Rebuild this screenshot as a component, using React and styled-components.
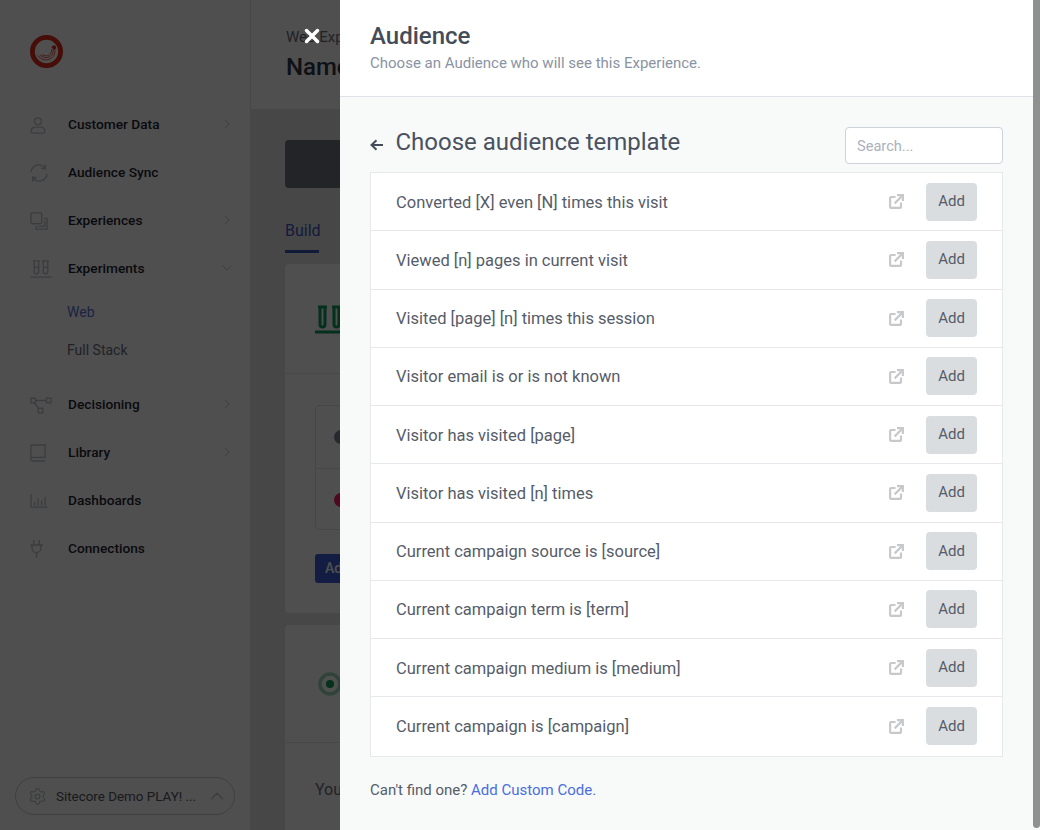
import React from 'react'
import styled, { createGlobalStyle } from 'styled-components'
import { ChevronRight, ChevronDown, ChevronUp, Settings } from 'lucide-react'

const GlobalStyle = createGlobalStyle`
  html, body { margin: 0; padding: 0; height: 100%; overflow: hidden; }
  body { font-family: Roboto, "Liberation Sans", sans-serif; color: #2d3748; }
  * { box-sizing: border-box; }
`

const Page = styled.div`
  position: relative;
  display: flex;
  width: 1040px;
  height: 830px;
  overflow: hidden;
  background: #e6e6e6;
`

const Sidebar = styled.aside`
  flex: 0 0 251px;
  display: flex;
  flex-direction: column;
  padding: 35px 15px 15px 30px;
  background: #fff;
  border-right: 1px solid #e2e5ea;
`

const LogoWrap = styled.div`
  height: 66px;
`

const Nav = styled.nav`
  display: flex;
  flex-direction: column;
  flex: 1;
`

const NavItem = styled.div`
  display: flex;
  align-items: center;
  height: 48px;
  font-size: 13.7px;
  font-weight: 500;
  color: #1f2533;
`

const NavIcon = styled.span`
  flex: 0 0 38px;
  display: flex;
  align-items: center;
  color: #bfc3ca;
`

const NavLabel = styled.span`
  flex: 1;
  margin-top: -2px;
`

const NavArrow = styled.span`
  display: flex;
  margin-top: -2px;
  color: #c4c7cc;
`

const SubItem = styled.div`
  display: flex;
  align-items: center;
  height: 38px;
  padding-left: 37px;
  font-size: 14px;
  color: ${p => (p.$active ? '#5b70dc' : '#6a6f7a')};
`

const SubList = styled.div`
  display: flex;
  flex-direction: column;
  margin-bottom: 12px;
`

const AccountPill = styled.div`
  display: flex;
  align-items: center;
  align-self: flex-start;
  width: 220px;
  height: 38px;
  margin-left: -15px;
  padding: 0 6px 0 12px;
  gap: 9px;
  border: 1px solid #c9ccd2;
  border-radius: 19px;
  font-size: 13.4px;
  color: #50545e;
  & > svg { flex: none; }
`

const AccountName = styled.span`
  flex: 1;
  white-space: nowrap;
`

const Main = styled.main`
  flex: 1;
  min-width: 0;
  display: flex;
  flex-direction: column;
`

const PageHeader = styled.header`
  height: 109px;
  padding: 27px 35px;
  background: #fff;
`

const Crumb = styled.div`
  font-size: 15px;
  line-height: 20px;
  color: #6a6f7a;
  white-space: nowrap;
`

const PageTitle = styled.h1`
  margin: 5px 0 0;
  font-size: 24px;
  line-height: 30px;
  font-weight: 500;
  color: #2d3748;
  white-space: nowrap;
`

const Content = styled.div`
  flex: 1;
  display: flex;
  flex-direction: column;
  padding: 31px 0 0 34px;
`

const DarkBar = styled.div`
  width: 500px;
  height: 48px;
  border-radius: 4px;
  background: #737680;
`

const Tabs = styled.div`
  display: flex;
  height: 34px;
  margin-top: 31px;
  margin-bottom: 11px;
`

const Tab = styled.div`
  width: 34px;
  height: 34px;
  padding-top: 2px;
  border-bottom: 3px solid #3b55b8;
  font-size: 16px;
  line-height: 20px;
  color: #3f58c4;
`

const Card = styled.section`
  width: 600px;
  height: ${p => p.$h}px;
  margin-bottom: 12px;
  flex: none;
  background: #fff;
  border-radius: 4px;
`

const CardHead = styled.div`
  display: flex;
  align-items: center;
  height: ${p => p.$h}px;
  padding-left: ${p => p.$pad}px;
  padding-top: ${p => p.$top || 0}px;
  border-bottom: 1px solid #e6e8eb;
`

const CardBody = styled.div`
  padding: 31px 30px 30px;
`

const VariantTable = styled.div`
  width: 500px;
  height: 125px;
  border: 1px solid #e2e5ea;
  border-radius: 4px;
`

const VariantRow = styled.div`
  display: flex;
  align-items: center;
  height: 62px;
  padding-left: 18px;
  & + & { border-top: 1px solid #e2e5ea; }
`

const Dot = styled.span`
  width: 14px;
  height: 14px;
  border-radius: 50%;
  background: ${p => p.$color};
`

const BlueButton = styled.div`
  width: 70px;
  height: 29px;
  margin-top: 24px;
  padding: 6px 10px;
  border-radius: 3px;
  background: #3f5fd8;
  color: #fff;
  font-size: 14px;
  font-weight: 500;
`

const CardText = styled.div`
  padding: 37px 30px;
  font-size: 16px;
  color: #6a6f7a;
`

const Overlay = styled.div`
  position: absolute;
  inset: 0;
  background: rgba(0, 0, 0, 0.69);
`

const CloseButton = styled.button`
  position: absolute;
  top: 25px;
  left: 301px;
  display: flex;
  padding: 0;
  border: 0;
  background: none;
  color: #fff;
`

const Drawer = styled.div`
  position: absolute;
  top: 0;
  right: 0;
  bottom: 0;
  width: 700px;
  display: flex;
  flex-direction: column;
  background: #f8fafa;
`

const Scrollbar = styled.div`
  position: absolute;
  top: 0;
  right: 0;
  width: 7px;
  height: 828px;
  border-radius: 0 0 4px 4px;
  background: #8f9190;
`

const DrawerHeader = styled.header`
  height: 97px;
  padding: 21px 30px 0;
  background: #fff;
  border-bottom: 1px solid #dfe2e6;
`

const DrawerTitle = styled.h2`
  margin: 0;
  font-size: 24px;
  line-height: 30px;
  font-weight: 500;
  color: #454c59;
`

const DrawerSub = styled.p`
  margin: 2px 0 0;
  font-size: 15px;
  line-height: 20px;
  color: #8a93a3;
`

const DrawerBody = styled.div`
  display: flex;
  flex-direction: column;
  padding: 30px 37px 0 30px;
`

const TemplateBar = styled.div`
  display: flex;
  align-items: flex-start;
  height: 37px;
  margin-bottom: 8px;
`

const BackLink = styled.span`
  display: flex;
  width: 25.5px;
  margin-top: 12px;
  color: #454c59;
`

const TemplateTitle = styled.h3`
  flex: 1;
  margin: 0;
  font-size: 24px;
  line-height: 30px;
  font-weight: 400;
  color: #4a5160;
`

const SearchInput = styled.input`
  width: 158px;
  height: 37px;
  padding: 0 11px;
  border: 1px solid #cdd1d8;
  border-radius: 4px;
  background: #fff;
  font-family: inherit;
  font-size: 14.6px;
  outline: none;
  &::placeholder { color: #aab1bd; opacity: 1; }
`

const TemplateList = styled.div`
  display: flex;
  flex-direction: column;
  border: 1px solid #e6e8eb;
  background: #fff;
`

const TemplateRow = styled.div`
  display: flex;
  align-items: center;
  height: 58.25px;
  padding: 0 25px;
  font-size: 16.5px;
  color: #565c69;
  border-bottom: 1px solid #e6e8eb;
  &:last-child { border-bottom: 0; }
`

const RowLabel = styled.span`
  flex: 1;
  margin-top: 1px;
`

const OpenLink = styled.span`
  display: flex;
  margin-right: 22px;
  color: #c6c8cb;
`

const AddButton = styled.button`
  width: 51px;
  height: 38px;
  padding: 0 0 1px;
  border: 0;
  border-radius: 4px;
  background: #dadde0;
  font-family: inherit;
  font-size: 15px;
  color: #565c69;
`

const Footnote = styled.p`
  margin: 23px 0 0;
  font-size: 15px;
  line-height: 20px;
  color: #565c69;
`

const Link = styled.a`
  color: #4a6ee0;
  text-decoration: none;
`

const SitecoreLogo = () => (
  <svg width="33" height="33" viewBox="0 0 34 34" fill="none">
    <circle cx="17" cy="17" r="14.5" stroke="#e02c1d" strokeWidth="5" />
    <path d="M8 21c4 6 12 6 16 1 1.500-2 2-5 1.500-8" stroke="#e02c1d" strokeWidth=".8" />
    <path d="M10 20.500c3.500 3.500 9.500 4 12.500 0 1.300-2 1.700-4 1.500-6.500" stroke="#e02c1d" strokeWidth=".8" />
    <path d="M12 20c3 2 7 2 9-.5 1-1.300 1.500-3 1.300-5" stroke="#e02c1d" strokeWidth=".8" />
    <path d="M22 13l2-2.500 2.500.5.500 3-2.500 1z" fill="#e02c1d" />
  </svg>
)

const line = { fill: 'none', stroke: 'currentColor', strokeWidth: 1.5 }

const UserIcon = () => (
  <svg width="16" height="17" viewBox="0 0 18 20" {...line}>
    <circle cx="9" cy="5" r="4" />
    <path d="M1 17c0-3 2-5 5-5h6c3 0 5 2 5 5 0 1-.5 2-2 2H3c-1.500 0-2-1-2-2z" />
  </svg>
)

const SyncIcon = () => (
  <svg width="18" height="18" viewBox="0 0 20 20" {...line}>
    <path d="M1 9c.5-4.500 4-8 8.500-8 3 0 5.500 1.500 7.500 4V.5M17.500 5h-5" />
    <path d="M19 11c-.5 4.500-4 8-8.500 8-3 0-5.500-1.500-7.500-4v4.500M2.500 15h5" />
  </svg>
)

const CopyIcon = () => (
  <svg width="18" height="18" viewBox="0 0 20 20" {...line}>
    <rect x="1" y="1" width="12" height="12" rx="1.500" />
    <path d="M15.500 7H19v12H7v-3.500M9 16h7.500V9.500" />
  </svg>
)

const TubesIcon = () => (
  <svg width="22" height="18" viewBox="0 0 24 20" {...line}>
    <path d="M3 1h8M13 1h8M4.500 1v12c0 3 5 3 5 0V1M14.500 1v12c0 3 5 3 5 0V1M5 8h4M15 8h4M0 19h24" />
  </svg>
)

const TreeIcon = () => (
  <svg width="22" height="17" viewBox="0 0 24 18" {...line}>
    <rect x="1" y="1" width="5" height="5" />
    <rect x="18" y="1" width="5" height="5" />
    <rect x="9" y="12" width="5" height="5" />
    <path d="M6 3.500h12M4.500 6l5 6" />
  </svg>
)

const BookIcon = () => (
  <svg width="16" height="18" viewBox="0 0 18 20" {...line}>
    <path d="M1 16V2.500C1 1.500 1.500 1 2.500 1H17v14H2.500C1.500 15 1 15.500 1 16.500v1C1 18.500 1.500 19 2.500 19H17" />
  </svg>
)

const ChartIcon = () => (
  <svg width="18" height="14" viewBox="0 0 20 16" {...line}>
    <path d="M1 0v15h19M5 13V9M9 13V5M13 13V7M17 13V3" />
  </svg>
)

const PlugIcon = () => (
  <svg width="13" height="18" viewBox="0 0 14 20" {...line}>
    <path d="M4 0v5M10 0v5M0 5.500h14M2 5.500v3c0 3 2 5.500 5 5.500s5-2.500 5-5.500v-3M7 14v6" />
  </svg>
)

const ExternalIcon = () => (
  <svg width="15" height="15" viewBox="0 0 16 16" fill="none" stroke="currentColor" strokeWidth="2.300">
    <path d="M7 3.200H2.200a1 1 0 0 0-1 1v9.600a1 1 0 0 0 1 1h9.600a1 1 0 0 0 1-1V9" />
    <path d="M6 10L14 2" />
    <path d="M8.500 1.200h6.300v6.300" />
  </svg>
)

const navBefore = [
  { label: 'Customer Data', icon: <UserIcon />, arrow: true },
  { label: 'Audience Sync', icon: <SyncIcon /> },
  { label: 'Experiences', icon: <CopyIcon />, arrow: true },
]

const navAfter = [
  { label: 'Decisioning', icon: <TreeIcon />, arrow: true },
  { label: 'Library', icon: <BookIcon />, arrow: true },
  { label: 'Dashboards', icon: <ChartIcon /> },
  { label: 'Connections', icon: <PlugIcon /> },
]

const templates = [
  'Converted [X] even [N] times this visit',
  'Viewed [n] pages in current visit',
  'Visited [page] [n] times this session',
  'Visitor email is or is not known',
  'Visitor has visited [page]',
  'Visitor has visited [n] times',
  'Current campaign source is [source]',
  'Current campaign term is [term]',
  'Current campaign medium is [medium]',
  'Current campaign is [campaign]',
]

const renderNav = item => (
  <NavItem key={item.label}>
    <NavIcon>{item.icon}</NavIcon>
    <NavLabel>{item.label}</NavLabel>
    {item.arrow && <NavArrow><ChevronRight size={16} strokeWidth={1.5} /></NavArrow>}
  </NavItem>
)

const App = () => {
  return (
    <Page>
      <GlobalStyle />
      <Sidebar>
        <LogoWrap><SitecoreLogo /></LogoWrap>
        <Nav>
          {navBefore.map(renderNav)}
          <NavItem>
            <NavIcon><TubesIcon /></NavIcon>
            <NavLabel>Experiments</NavLabel>
            <NavArrow><ChevronDown size={16} strokeWidth={1.5} /></NavArrow>
          </NavItem>
          <SubList>
            <SubItem $active>Web</SubItem>
            <SubItem>Full Stack</SubItem>
          </SubList>
          {navAfter.map(renderNav)}
        </Nav>
        <AccountPill>
          <Settings size={19} color="#bfc3ca" strokeWidth={1.5} />
          <AccountName>Sitecore Demo PLAY! ...</AccountName>
          <ChevronUp size={22} color="#bfc3ca" strokeWidth={1.5} />
        </AccountPill>
      </Sidebar>

      <Main>
        <PageHeader>
          <Crumb>Web Exp</Crumb>
          <PageTitle>Name</PageTitle>
        </PageHeader>
        <Content>
          <DarkBar />
          <Tabs><Tab>Build</Tab></Tabs>
          <Card $h={349}>
            <CardHead $h={110} $pad={30}>
              <svg width="40" height="30" viewBox="0 0 40 30" fill="none" stroke="#0e9a5c" strokeWidth="3">
                <path d="M3 3h9M5 3v17c0 4 5 4 5 0V3M17 3h9M19 3v17c0 4 5 4 5 0V3M0 28h40" />
              </svg>
            </CardHead>
            <CardBody>
              <VariantTable>
                <VariantRow><Dot $color="#7d8494" /></VariantRow>
                <VariantRow><Dot $color="#ff1a66" /></VariantRow>
              </VariantTable>
              <BlueButton>Add</BlueButton>
            </CardBody>
          </Card>
          <Card $h={300}>
            <CardHead $h={118} $pad={33} $top={1}>
              <svg width="24" height="24" viewBox="0 0 24 24">
                <circle cx="12" cy="12" r="10" fill="none" stroke="#9ad8bf" strokeWidth="3.500" />
                <circle cx="12" cy="12" r="4" fill="#0e9a5c" />
              </svg>
            </CardHead>
            <CardText>You</CardText>
          </Card>
        </Content>
      </Main>

      <Overlay />
      <CloseButton aria-label="Close">
        <svg width="22" height="22" viewBox="0 0 22 22" fill="none" stroke="currentColor" strokeWidth="3.500" strokeLinecap="round">
          <path d="M5.500 5.500l11 11M16.500 5.500l-11 11" />
        </svg>
      </CloseButton>

      <Drawer>
        <DrawerHeader>
          <DrawerTitle>Audience</DrawerTitle>
          <DrawerSub>Choose an Audience who will see this Experience.</DrawerSub>
        </DrawerHeader>
        <DrawerBody>
          <TemplateBar>
            <BackLink>
              <svg width="13" height="12" viewBox="0 0 13 12" fill="none" stroke="currentColor" strokeWidth="2">
                <path d="M13 6H2M6.500 1.200L1.500 6l5 4.800" />
              </svg>
            </BackLink>
            <TemplateTitle>Choose audience template</TemplateTitle>
            <SearchInput placeholder="Search..." />
          </TemplateBar>
          <TemplateList>
            {templates.map(t => (
              <TemplateRow key={t}>
                <RowLabel>{t}</RowLabel>
                <OpenLink><ExternalIcon /></OpenLink>
                <AddButton>Add</AddButton>
              </TemplateRow>
            ))}
          </TemplateList>
          <Footnote>Can't find one? <Link href="#">Add Custom Code.</Link></Footnote>
        </DrawerBody>
        <Scrollbar />
      </Drawer>
    </Page>
  )
}

export default App
